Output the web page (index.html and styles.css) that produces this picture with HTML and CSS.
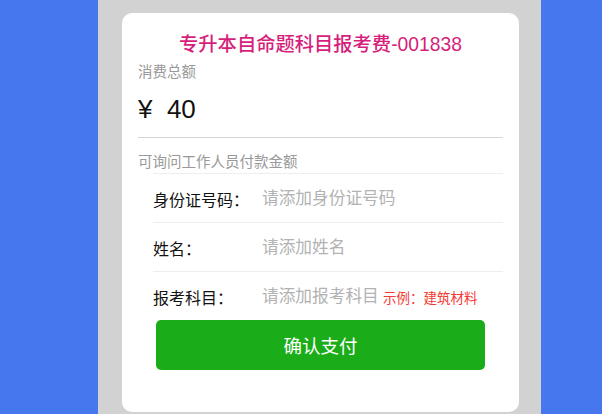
FILE: index.html
```html
<!DOCTYPE html>
<html lang="zh-CN">
<head>
    <meta charset="UTF-8">
    <meta name="viewport" content="width=device-width, initial-scale=1.0">
    <title>专升本自命题科目报考费</title>
    <link rel="stylesheet" href="styles.css">
</head>
<body>

<div class="page">
    <div class="card">
        <h1 class="title">专升本自命题科目报考费-001838</h1>

        <div class="label-small">消费总额</div>
        <div class="amount">¥&nbsp;&nbsp;40</div>
        <div class="label-small hint">可询问工作人员付款金额</div>

        <div class="form-list">
            <div class="form-row">
                <label class="form-label" for="id-card">身份证号码：</label>
                <input class="form-input" id="id-card" type="text" placeholder="请添加身份证号码">
            </div>
            <div class="form-row">
                <label class="form-label" for="name">姓名：</label>
                <input class="form-input" id="name" type="text" placeholder="请添加姓名">
            </div>
            <div class="form-row">
                <label class="form-label" for="subject">报考科目：</label>
                <input class="form-input short" id="subject" type="text" placeholder="请添加报考科目">
                <span class="example">示例：建筑材料</span>
            </div>
        </div>

        <button class="pay-button" type="button">确认支付</button>
    </div>
</div>

</body>
</html>
```

FILE: styles.css
```css
body {
    margin: 0;
    background-color: #4677ee;
    font-family: "Liberation Sans", "Noto Sans CJK SC", sans-serif;
    color: #111;
}
.page {
    width: 443px;
    height: 414px;
    margin-left: 98px;
    background-color: #d2d2d2;
    padding: 13px 22px 0 24px;
    box-sizing: border-box;
}
.card {
    background-color: #fff;
    border-radius: 10px;
    height: 399px;
    padding: 0 16px;
}
.title {
    margin: 0;
    padding-top: 20px;
    font-size: 19.3px;
    line-height: 24px;
    font-weight: 500;
    color: #d61f7c;
    text-align: center;
}
.label-small {
    font-size: 14.5px;
    line-height: 20px;
    color: #999;
    margin-top: 5px;
}
.amount {
    font-size: 26px;
    line-height: 34px;
    padding: 10px 0 11px;
    border-bottom: 1px solid #d6d6d6;
}
.hint {
    margin-top: 14px;
    padding-bottom: 1px;
}
.form-list {
    margin-left: 15px;
}
.form-row {
    display: flex;
    align-items: center;
    height: 49px;
    padding-top: 2px;
    box-sizing: border-box;
    border-top: 1px solid #eee;
}
.form-label {
    width: 109px;
    flex-shrink: 0;
    font-size: 16px;
}
.form-input {
    flex: 1;
    border: none;
    outline: none;
    padding: 0;
    font-size: 16.7px;
    font-family: inherit;
    color: #111;
}
.form-input::placeholder {
    color: #b2b2b2;
}
.form-input.short {
    flex: none;
    width: 121px;
}
.example {
    font-size: 13.5px;
    color: #f43a33;
    white-space: nowrap;
}
.pay-button {
    display: block;
    width: 329px;
    height: 50px;
    margin: 0 auto;
    border: none;
    border-radius: 5px;
    background-color: #1aad19;
    color: #fff;
    font-size: 18.5px;
    font-family: inherit;
}
```
